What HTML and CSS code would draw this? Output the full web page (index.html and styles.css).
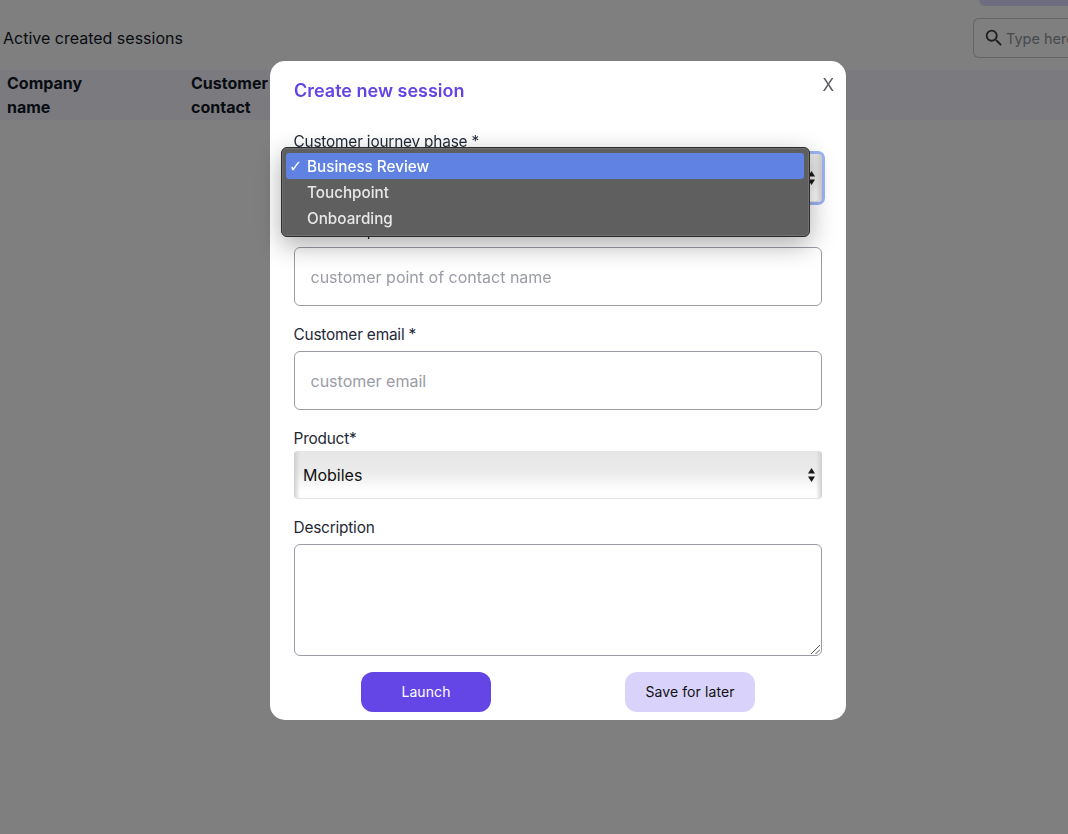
FILE: index.html
```html
<!DOCTYPE html>
<html lang="en">
<head>
<meta charset="utf-8">
<title>Create new session</title>
<link rel="stylesheet" href="styles.css">
</head>
<body>
<main class="page">
  <div class="topbar"><span class="top-btn"></span></div>
  <div class="head-row">
    <h2 class="section-title">Active created sessions</h2>
    <div class="search">
      <svg class="search-icon" width="22" height="22" viewBox="0 0 24 24"><path fill="#3d3d3d" d="M15.5 14h-.79l-.28-.27A6.47 6.47 0 0 0 16 9.5 6.5 6.5 0 1 0 9.5 16c1.61 0 3.09-.59 4.23-1.57l.27.28v.79l5 4.99L20.49 19l-4.99-5zm-6 0C7.01 14 5 11.99 5 9.5S7.01 5 9.5 5 14 7.01 14 9.5 11.99 14 9.5 14z"/></svg>
      <span class="search-text">Type here</span>
    </div>
  </div>
  <div class="table-head">
    <div class="th th-company">Company<br>name</div>
    <div class="th">Customer<br>contact</div>
  </div>
</main>

<div class="overlay">
  <section class="modal">
    <div class="modal-head">
      <h1 class="modal-title">Create new session</h1>
      <span class="close">X</span>
    </div>

    <div class="field">
      <label class="label label-tight">Customer journey phase *</label>
      <div class="select select-focus">
        <span>Business Review</span>
        <svg class="arrows" width="7" height="14" viewBox="0 0 7 14"><path fill="#1a1a1a" d="M3.500 0 7 5.500H0zM3.500 14 0 8.500h7z"/></svg>
      </div>
      <div class="dropdown">
        <div class="option option-active"><span class="check">✓</span>Business Review</div>
        <div class="option">Touchpoint</div>
        <div class="option">Onboarding</div>
      </div>
    </div>

    <div class="field">
      <label class="label">Customer point of contact *</label>
      <div class="input placeholder">customer point of contact name</div>
    </div>

    <div class="field">
      <label class="label">Customer email *</label>
      <div class="input placeholder">customer email</div>
    </div>

    <div class="field">
      <label class="label label-tight">Product*</label>
      <div class="select">
        <span>Mobiles</span>
        <svg class="arrows" width="7" height="14" viewBox="0 0 7 14"><path fill="#1a1a1a" d="M3.500 0 7 5.500H0zM3.500 14 0 8.500h7z"/></svg>
      </div>
    </div>

    <div class="field">
      <label class="label">Description</label>
      <div class="textarea">
        <svg class="grip" width="9" height="9" viewBox="0 0 9 9"><path stroke="#555" stroke-width="1" fill="none" d="M0 9 9 0M4.500 9 9 4.500"/></svg>
      </div>
    </div>

    <div class="actions">
      <button class="btn btn-primary">Launch</button>
      <button class="btn btn-secondary">Save for later</button>
    </div>
  </section>
</div>
</body>
</html>
```
FILE: styles.css
```css
* { box-sizing: border-box; }
html, body { margin: 0; height: 100%; overflow: hidden; }
body { font-family: Inter, "Liberation Sans", sans-serif; color: #111827; background: #fff; }

.page { width: 1068px; height: 834px; overflow: hidden; }
.topbar { height: 18px; display: flex; justify-content: flex-end; }
.top-btn { width: 89px; height: 6px; background: #ddd8ff; border-radius: 0 0 0 6px; }
.head-row { display: flex; justify-content: space-between; align-items: center; height: 40px; margin-bottom: 12px; padding-left: 3px; }
.section-title { margin: 0; font-size: 16px; font-weight: 400; line-height: 24px; }
.search { width: 95px; height: 40px; border: 1px solid #c9c9cf; border-right: 0; border-radius: 6px 0 0 6px; display: flex; align-items: center; padding-left: 9px; gap: 1px; white-space: nowrap; overflow: hidden; }
.search-icon { flex: none; }
.search-text { font-size: 14.500px; color: #8f929b; }
.table-head { display: flex; height: 50px; background: #f6f5fd; padding: 1px 7px; }
.th { font-size: 16px; font-weight: 700; line-height: 24px; }
.th-company { width: 184px; }

.overlay { position: fixed; inset: 0; background: rgba(0, 0, 0, 0.5); }
.modal { position: absolute; left: 270px; top: 61px; width: 576px; height: 659px; background: #fff; border-radius: 15px; padding: 0 24px; }
.modal-head { position: relative; height: 68px; padding-top: 17px; }
.modal-title { margin: 0; font-size: 18px; font-weight: 600; line-height: 25px; color: #6544e4; }
.close { position: absolute; right: -12px; top: 14px; font-size: 17px; line-height: 20px; color: #5b5b66; }

.field { position: relative; margin-bottom: 16px; }
.label { display: block; font-size: 15.400px; line-height: 26px; color: #1f2937; letter-spacing: -0.2px; margin-bottom: 3px; margin-left: -0.5px; }
.label-tight { margin-bottom: -1px; }

.input { height: 59px; border: 1px solid #9b9ba6; border-radius: 6px; display: flex; align-items: center; padding-left: 15.500px; font-size: 16px; }
.placeholder { color: #9a9ca6; }

.select { position: relative; height: 48px; display: flex; align-items: center; padding-left: 9px; font-size: 16px; color: #111; border-radius: 4px; border-bottom: 1px solid #e4e4e8;
  background:
    linear-gradient(90deg, #cfcfcf 0, rgba(255,255,255,0) 6px, rgba(255,255,255,0) calc(100% - 6px), #cfcfcf 100%),
    linear-gradient(180deg, #e6e6e6 0, #ebebeb 45%, #fff 85%); }
.select-focus { outline: 3px solid #9db4f5; outline-offset: 0; }
.arrows { position: absolute; right: 7px; top: 50%; margin-top: -7px; }

.dropdown { position: absolute; z-index: 2; left: -13px; top: 18px; width: 529px; height: 90px; padding: 5px 5px 5px 4px; background: #5f5f5f; border: 1px solid #2b2b2b; border-radius: 6px; box-shadow: 0 0 0 1px rgba(150,150,150,.35) inset, 0 8px 26px rgba(0,0,0,.32); }
.option { position: relative; height: 26px; line-height: 28px; padding-left: 21px; font-size: 15.250px; font-weight: 500; color: #e8e8e8; border-radius: 3px; }
.option-active { background: #5f82e3; color: #fff; }
.check { position: absolute; left: 3px; top: 0; font-family: "DejaVu Sans", sans-serif; font-size: 16px; font-weight: 700; }

.textarea { position: relative; height: 112px; border: 1px solid #9b9ba6; border-radius: 6px; }
.grip { position: absolute; right: 1px; bottom: 1px; }

.actions { display: flex; justify-content: space-between; padding: 0 67px; }
.btn { width: 130px; height: 40px; border: 0; border-radius: 12px; padding: 0 0 2px; font-family: inherit; font-size: 14px; font-weight: 400; letter-spacing: 0.1px; }
.btn-primary { background: #6445e6; color: #fff; }
.btn-secondary { background: #d9d3fb; color: #111; }
```
